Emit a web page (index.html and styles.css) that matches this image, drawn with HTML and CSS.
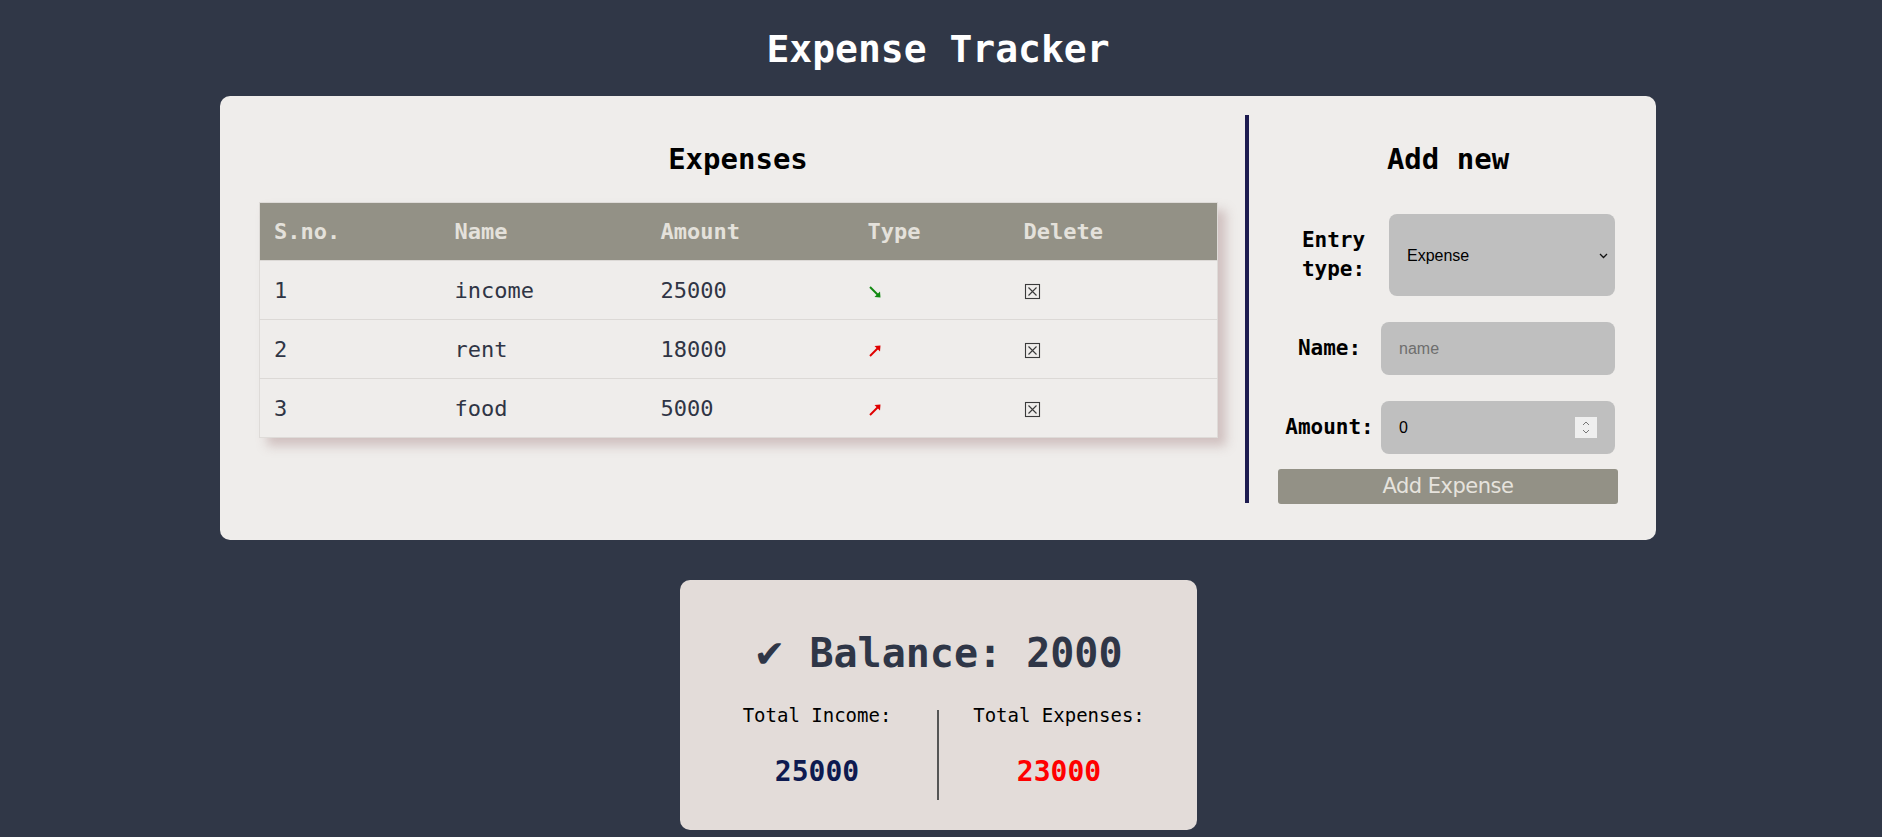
FILE: index.html
```html
<!DOCTYPE html>
<html lang="en">
<head>
<meta charset="utf-8">
<title>Expense Tracker</title>
<link rel="stylesheet" href="styles.css">
</head>
<body>
<h1 class="title">Expense Tracker</h1>
<main class="card">
  <section class="list">
    <h2 class="heading">Expenses</h2>
    <table class="table">
      <colgroup>
        <col class="c1"><col class="c2"><col class="c3"><col class="c4"><col class="c5">
      </colgroup>
      <thead>
        <tr><th>S.no.</th><th>Name</th><th>Amount</th><th>Type</th><th>Delete</th></tr>
      </thead>
      <tbody>
        <tr>
          <td>1</td><td>income</td><td>25000</td>
          <td><svg class="arrow" width="14" height="14" viewBox="0 0 14 14"><path d="M2 2 L11 11" stroke="#128a12" stroke-width="2" fill="none"/><path d="M12.5 12.5 L6.5 12 L12 6.5 Z" fill="#128a12"/></svg></td>
          <td><svg class="del" width="17" height="17" viewBox="0 0 17 17"><rect x="1.5" y="1.5" width="14" height="14" fill="none" stroke="#3a3a3a" stroke-width="1.1"/><path d="M4.5 4.5 L12.5 12.5 M12.5 4.5 L4.5 12.5" stroke="#3a3a3a" stroke-width="1.1"/></svg></td>
        </tr>
        <tr>
          <td>2</td><td>rent</td><td>18000</td>
          <td><svg class="arrow" width="14" height="14" viewBox="0 0 14 14"><path d="M2 12 L11 3" stroke="#e00000" stroke-width="2" fill="none"/><path d="M12.5 1.5 L6.5 2 L12 7.5 Z" fill="#e00000"/></svg></td>
          <td><svg class="del" width="17" height="17" viewBox="0 0 17 17"><rect x="1.5" y="1.5" width="14" height="14" fill="none" stroke="#3a3a3a" stroke-width="1.1"/><path d="M4.5 4.5 L12.5 12.5 M12.5 4.5 L4.5 12.5" stroke="#3a3a3a" stroke-width="1.1"/></svg></td>
        </tr>
        <tr>
          <td>3</td><td>food</td><td>5000</td>
          <td><svg class="arrow" width="14" height="14" viewBox="0 0 14 14"><path d="M2 12 L11 3" stroke="#e00000" stroke-width="2" fill="none"/><path d="M12.5 1.5 L6.5 2 L12 7.5 Z" fill="#e00000"/></svg></td>
          <td><svg class="del" width="17" height="17" viewBox="0 0 17 17"><rect x="1.5" y="1.5" width="14" height="14" fill="none" stroke="#3a3a3a" stroke-width="1.1"/><path d="M4.5 4.5 L12.5 12.5 M12.5 4.5 L4.5 12.5" stroke="#3a3a3a" stroke-width="1.1"/></svg></td>
        </tr>
      </tbody>
    </table>
  </section>
  <section class="add">
    <h2 class="heading">Add new</h2>
    <form class="form">
      <div class="row row-type">
        <label class="label" for="type">Entry type:</label>
        <div class="select-wrap">
          <select id="type" class="select">
            <option>Expense</option>
            <option>Income</option>
          </select>
          <svg class="chev" width="9" height="6" viewBox="0 0 9 6"><path d="M1 1 L4.5 4.5 L8 1" stroke="#111" stroke-width="1.3" fill="none"/></svg>
        </div>
      </div>
      <div class="row row-name">
        <label class="label" for="name">Name:</label>
        <input id="name" class="input" type="text" placeholder="name">
      </div>
      <div class="row row-amount">
        <label class="label" for="amount">Amount:</label>
        <div class="num-wrap">
          <input id="amount" class="input" type="number" value="0">
          <span class="spin"><svg width="22" height="21" viewBox="0 0 22 21"><path d="M8 8 L11 5 L14 8" stroke="#777" stroke-width="1" fill="none"/><path d="M8 13 L11 16 L14 13" stroke="#777" stroke-width="1" fill="none"/></svg></span>
        </div>
      </div>
      <button type="button" class="add-btn">Add Expense</button>
    </form>
  </section>
</main>
<section class="summary">
  <h2 class="balance"><span class="check">✔</span> Balance: 2000</h2>
  <div class="totals">
    <div class="total">
      <div class="total-label">Total Income:</div>
      <div class="total-value income">25000</div>
    </div>
    <div class="divider"></div>
    <div class="total">
      <div class="total-label">Total Expenses:</div>
      <div class="total-value expense">23000</div>
    </div>
  </div>
</section>
</body>
</html>
```
FILE: styles.css
```css
html, body {
  margin: 0;
}
body {
  padding: 0 6px 0 0;
  background: #303747;
  font-family: "DejaVu Sans Mono", "Liberation Mono", monospace;
}

.title {
  margin: 26px 0 0;
  text-align: center;
  color: #ffffff;
  font-size: 38px;
  line-height: 46px;
  font-weight: bold;
}

.card {
  margin: 24px auto 0;
  width: 1436px;
  height: 444px;
  box-sizing: border-box;
  background: #efedeb;
  border-radius: 10px;
  display: flex;
  padding: 19px 0 37px;
}

.list {
  width: 1025px;
  box-sizing: border-box;
  padding: 0 28px 0 39px;
}

.heading {
  margin: 27px 0 26px;
  font-size: 29px;
  line-height: 34px;
  text-align: center;
  color: #000;
  font-weight: bold;
}

.table {
  width: 958px;
  border-collapse: collapse;
  table-layout: fixed;
  border: 1px solid #dedbd8;
  box-shadow: 8px 8px 10px rgba(170, 140, 140, 0.45);
}
.c1 { width: 181px; }
.c2 { width: 206px; }
.c3 { width: 207px; }
.c4 { width: 156px; }
.c5 { width: 208px; }

.table th {
  background: #939186;
  color: #e4e1db;
  height: 57px;
  text-align: left;
  padding: 0 0 0 14px;
  font-size: 22px;
  font-weight: bold;
}
.table td {
  height: 58px;
  border-top: 1px solid #dcd9d6;
  padding: 0 0 0 14px;
  color: #2f3545;
  font-size: 22px;
}
.arrow, .del {
  vertical-align: middle;
  display: inline-block;
}

.add {
  flex: 1;
  border-left: 4px solid #1d1b4f;
  padding: 0 38px 0 29px;
}

.form {
  display: flex;
  flex-direction: column;
  margin: 38px 0 0;
}

.row {
  display: flex;
  align-items: center;
  padding-right: 3px;
}
.label {
  flex: 1;
  text-align: center;
  font-weight: bold;
  font-size: 21px;
  line-height: 29px;
  color: #000;
}
.row-type {
  height: 82px;
  margin-bottom: 26px;
}
.row-name {
  margin-bottom: 26px;
}
.row-amount {
  margin-bottom: 15px;
}

.select-wrap {
  position: relative;
  width: 226px;
  height: 82px;
}
.select {
  -webkit-appearance: none;
  appearance: none;
  width: 100%;
  height: 100%;
  border: 0;
  border-radius: 8px;
  background: #bfbfbf;
  font: 16px "Liberation Sans", Arial, sans-serif;
  padding: 0 0 0 18px;
  color: #000;
  margin: 0;
}
.chev {
  position: absolute;
  right: 7px;
  top: 39px;
  pointer-events: none;
}

.input {
  width: 234px;
  height: 53px;
  box-sizing: border-box;
  border: 0;
  border-radius: 8px;
  background: #bfbfbf;
  padding: 0 0 0 18px;
  font: 16px "Liberation Sans", Arial, sans-serif;
  color: #000;
  margin: 0;
  outline: none;
}
.input::placeholder {
  color: #6e6e6e;
}
.input::-webkit-inner-spin-button,
.input::-webkit-outer-spin-button {
  -webkit-appearance: none;
  margin: 0;
}

.num-wrap {
  position: relative;
  width: 234px;
  height: 53px;
}
.spin {
  position: absolute;
  right: 18px;
  top: 16px;
  width: 22px;
  height: 21px;
  background: #efefef;
  display: flex;
}

.add-btn {
  height: 35px;
  width: 340px;
  border: 0;
  border-radius: 3px;
  background: #939186;
  color: #e6e3dd;
  font: 21px "DejaVu Sans", "Liberation Sans", sans-serif;
  letter-spacing: -0.5px;
  padding: 0;
  line-height: 35px;
  margin: 0;
}

.summary {
  width: 517px;
  height: 250px;
  margin: 40px auto 0;
  box-sizing: border-box;
  background: #e3dcd9;
  border-radius: 10px;
  padding-top: 49px;
}
.balance {
  margin: 0;
  height: 48px;
  text-align: center;
  font-size: 40px;
  line-height: 48px;
  font-weight: bold;
  color: #2f3647;
}
.check {
  font-family: "DejaVu Sans", sans-serif;
  font-size: 38px;
  line-height: 0;
}
.totals {
  display: flex;
  justify-content: center;
  margin-top: 26px;
}
.total {
  width: 240px;
  text-align: center;
}
.total-label {
  font-size: 19px;
  line-height: 24px;
  color: #000;
}
.total-value {
  margin-top: 28px;
  font-size: 28px;
  line-height: 34px;
  font-weight: bold;
}
.income { color: #0e1a50; }
.expense { color: #ff0000; }
.divider {
  width: 2px;
  height: 90px;
  margin-top: 7px;
  background: #555555;
}
```
